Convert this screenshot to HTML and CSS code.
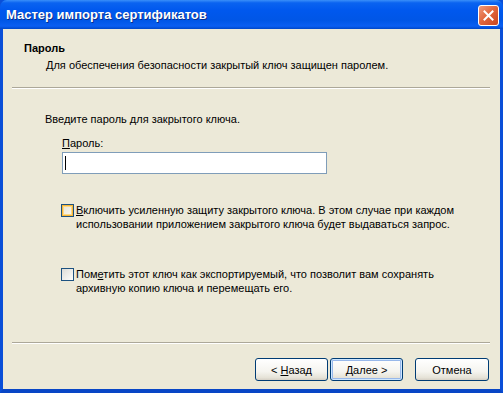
FILE: index.html
```html
<!DOCTYPE html>
<html lang="ru">
<head>
  <meta charset="UTF-8"/>
  <title>Мастер импорта сертификатов</title>
  <link rel="stylesheet" href="styles.css">
</head>
<body>

  <div class="window">

    <!-- Title bar -->
    <div class="titlebar">
      <span class="title">Мастер импорта сертификатов</span>
      <button class="close-btn">
        <svg width="11" height="11" viewBox="0 0 11 11"><path d="M1.5 1.5 L9.5 9.5 M9.5 1.5 L1.5 9.5" stroke="#fff" stroke-width="2" stroke-linecap="square"/></svg>
      </button>
    </div>

    <div class="content">

      <!-- Wizard header -->
      <div class="wiz-header">
        <h1>Пароль</h1>
        <p>Для обеспечения безопасности закрытый ключ защищен паролем.</p>
      </div>
      <div class="sep"></div>

      <!-- Page body -->
      <div class="wiz-body">
        <p class="intro">Введите пароль для закрытого ключа.</p>
        <div class="field">
          <label><u>П</u>ароль:</label>
          <div class="input"><span class="caret"></span></div>
        </div>

        <div class="check first">
          <span class="box hover"></span>
          <span class="check-text"><u>В</u>ключить усиленную защиту закрытого ключа. В этом случае при каждом<br>использовании приложением закрытого ключа будет выдаваться запрос.</span>
        </div>
        <div class="check second">
          <span class="box"></span>
          <span class="check-text">Пом<u>е</u>тить этот ключ как экспортируемый, что позволит вам сохранять<br>архивную копию ключа и перемещать его.</span>
        </div>
      </div>

      <div class="sep"></div>

      <!-- Buttons -->
      <div class="wiz-footer">
        <button class="btn">&lt; <u>Н</u>азад</button>
        <button class="btn default"><u>Д</u>алее &gt;</button>
        <button class="btn cancel">Отмена</button>
      </div>
    </div>
  </div>

</body>
</html>
```

FILE: styles.css
```css
* { margin:0; padding:0; box-sizing:border-box }
html, body { width:503px; height:393px; overflow:hidden }
body {
  font-family:'Liberation Sans', Arial, sans-serif;
  font-size:11px;
  color:#000;
  background:#0054e3;
}
u { text-decoration:underline; text-underline-offset:1px }

/* Window frame */
.window {
  width:503px; height:393px;
  display:flex; flex-direction:column;
  background:#0054e3;
  border-left:3px solid #0a4fd8;
  border-right:3px solid #0a4fd8;
  border-bottom:4px solid #0846c6;
}

/* Title bar */
.titlebar {
  height:29px; flex:none;
  display:flex; align-items:center;
  padding:0 1px 0 3px;
  margin:0 -3px;
  background:linear-gradient(#3a8ff9 0, #0a63f0 10%, #0058ee 35%, #0056e6 70%, #0a5ff2 90%, #0047c8 100%);
  border-radius:7px 7px 0 0;
}
.title {
  flex:1;
  padding-left:3px;
  color:#fff; font-weight:bold; font-size:13px;
  text-shadow:1px 1px 0 #0a2f8a;
}
.close-btn {
  width:21px; height:21px;
  margin-right:3px; margin-top:1px;
  display:flex; align-items:center; justify-content:center;
  border:1px solid #fff; border-radius:3px;
  background:linear-gradient(135deg, #f09a7c 0%, #e2693f 45%, #c9441e 100%);
}

/* Client area */
.content {
  flex:1;
  display:flex; flex-direction:column;
  background:#ece9d8;
}
.wiz-header {
  padding:12px 0 15px 21px;
  line-height:14px;
}
.wiz-header h1 { font-size:11px; font-weight:bold }
.wiz-header p { margin:3px 0 0 22px }

.sep {
  height:2px; flex:none;
  margin:0 10px 0 9px;
  border-top:1px solid #aca899;
  border-bottom:1px solid #fff;
}

.wiz-body {
  flex:1;
  padding:23px 0 0 42px;
  line-height:14px;
}
.field { margin:10px 0 0 17px }
.field label { display:block }
.input {
  width:265px; height:22px;
  margin-top:2px;
  background:#fff;
  border:1px solid #7f9db9;
  padding:3px 2px;
}
.caret { display:block; width:1px; height:14px; background:#000 }

/* Checkboxes */
.check { display:flex; gap:2px; margin-left:16px }
.check.first { margin-top:29px }
.check.second { margin-top:36px }
.box {
  flex:none;
  width:13px; height:13px;
  margin-top:1px;
  border:1px solid #1c5180;
  background:linear-gradient(135deg, #dcdcd7 0%, #fdfdfb 100%);
}
.box.hover {
  box-shadow:inset 0 0 0 1px #f8b636, inset 0 0 0 2px #fbd988;
  background:linear-gradient(135deg, #e5e2d3 0%, #fcfbf3 100%);
}

/* Footer buttons */
.wiz-footer {
  display:flex; justify-content:flex-end;
  padding:14px 11px 8px 0;
}
.btn {
  width:73px; height:23px;
  font-family:inherit; font-size:11px; color:#000;
  border:1px solid #003c74; border-radius:3px;
  background:linear-gradient(#ffffff 0%, #f5f4ef 60%, #e6e3d8 88%, #d6d0c5 100%);
}
.btn + .btn { margin-left:2px }
.btn.default {
  box-shadow:inset 0 0 0 1px #cee7ff, inset 0 0 0 2px #98b8ea;
}
.btn.cancel { width:74px; margin-left:12px }
```
